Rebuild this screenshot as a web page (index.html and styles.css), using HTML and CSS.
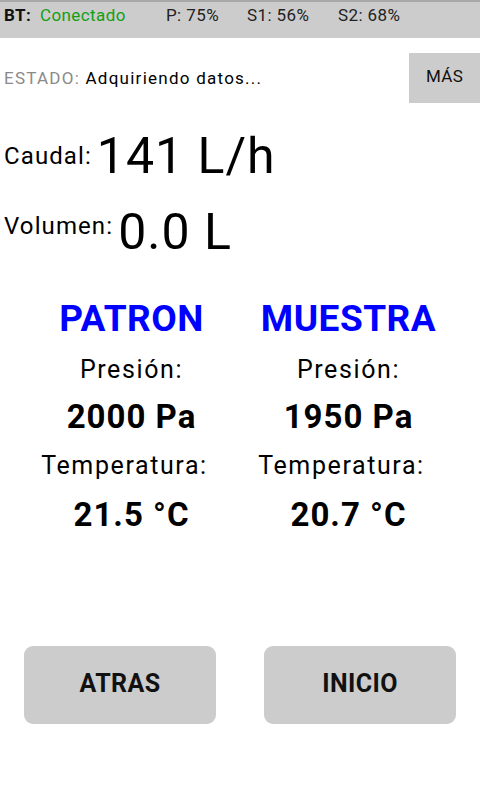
FILE: index.html
```html
<!DOCTYPE html>
<html lang="es">
<head>
<meta charset="utf-8">
<link rel="stylesheet" href="styles.css">
</head>
<body>
<div class="status-bar">
  <span class="bt-label">BT:</span>
  <span class="bt-state">Conectado</span>
  <span class="stat stat-p">P: 75%</span>
  <span class="stat stat-s1">S1: 56%</span>
  <span class="stat stat-s2">S2: 68%</span>
</div>
<div class="estado-row">
  <div class="estado"><span class="estado-label">ESTADO:</span> Adquiriendo datos...</div>
  <div class="mas-btn">MÁS</div>
</div>
<div class="measure measure-caudal">
  <span class="m-label">Caudal:</span>
  <span class="m-value">141 L/h</span>
</div>
<div class="measure measure-volumen">
  <span class="m-label">Volumen:</span>
  <span class="m-value">0.0 L</span>
</div>
<div class="columns">
  <div class="col">
    <div class="col-title">PATRON</div>
    <div class="col-label label-pres">Presión:</div>
    <div class="col-value value-pres">2000 Pa</div>
    <div class="col-label label-temp">Temperatura:</div>
    <div class="col-value value-temp">21.5 °C</div>
  </div>
  <div class="col">
    <div class="col-title">MUESTRA</div>
    <div class="col-label label-pres">Presión:</div>
    <div class="col-value value-pres">1950 Pa</div>
    <div class="col-label label-temp">Temperatura:</div>
    <div class="col-value value-temp">20.7 °C</div>
  </div>
</div>
<div class="buttons">
  <div class="btn">ATRAS</div>
  <div class="btn">INICIO</div>
</div>
</body>
</html>
```
FILE: styles.css
```css
html, body {
  margin: 0;
  padding: 0;
  background: #fff;
  width: 480px;
  height: 800px;
  overflow: hidden;
  font-family: Roboto, "Noto Sans", sans-serif;
  color: #000;
}
.status-bar {
  height: 38px;
  box-sizing: border-box;
  background: #cccccc;
  border-top: 2px solid #a8a8a8;
  display: flex;
  align-items: flex-start;
  padding: 3px 0 0 4px;
  font-size: 17px;
  line-height: 20px;
  letter-spacing: 0.4px;
  white-space: nowrap;
}
.bt-label {
  font-weight: 700;
  color: #111;
  width: 36px;
}
.bt-state {
  color: #12a012;
  width: 126px;
}
.stat {
  color: #222;
}
.stat-p {
  width: 81px;
}
.stat-s1 {
  width: 91px;
}
.estado-row {
  display: flex;
  align-items: flex-start;
  justify-content: space-between;
  margin-top: 15px;
  height: 50px;
}
.estado {
  font-size: 17px;
  line-height: 22px;
  letter-spacing: 1.25px;
  padding: 14px 0 0 4px;
  color: #000;
  white-space: nowrap;
}
.estado-label {
  color: #8a8a8a;
}
.mas-btn {
  width: 71px;
  height: 50px;
  background: #cccccc;
  font-size: 17px;
  line-height: 20px;
  letter-spacing: 0.3px;
  display: flex;
  justify-content: center;
  padding-top: 13px;
  box-sizing: border-box;
  color: #111;
}
.measure {
  display: flex;
  align-items: center;
  padding-left: 4px;
  height: 60px;
}
.measure-caudal {
  margin-top: 23px;
}
.measure-volumen {
  margin-top: 16px;
}
.m-label {
  font-size: 24px;
  line-height: 30px;
  letter-spacing: 1.1px;
  margin-right: 5px;
}
.measure-volumen .m-label {
  margin-bottom: 12px;
}
.m-value {
  font-size: 50px;
  line-height: 60px;
  letter-spacing: 1px;
}
.columns {
  display: grid;
  grid-template-columns: 1fr 1fr;
  margin: 32px 23px 0 23px;
}
.col {
  display: flex;
  flex-direction: column;
  align-items: center;
  text-align: center;
  white-space: nowrap;
}
.col-title {
  color: #0000ff;
  font-weight: 700;
  font-size: 37px;
  line-height: 50px;
  letter-spacing: 0.5px;
}
.col-label {
  font-size: 25px;
  letter-spacing: 1.6px;
}
.label-pres {
  line-height: 52px;
}
.label-temp {
  line-height: 56px;
  padding-right: 14px;
}
.col-value {
  font-weight: 700;
  font-size: 33px;
  line-height: 42px;
  letter-spacing: 1px;
}
.buttons {
  display: flex;
  justify-content: space-between;
  margin: 110px 24px 0 24px;
}
.btn {
  width: 192px;
  height: 78px;
  background: #cccccc;
  border-radius: 9px;
  display: flex;
  align-items: center;
  justify-content: center;
  padding-bottom: 4px;
  box-sizing: border-box;
  font-weight: 700;
  font-size: 25px;
  letter-spacing: 0.4px;
  color: #111;
}
```
